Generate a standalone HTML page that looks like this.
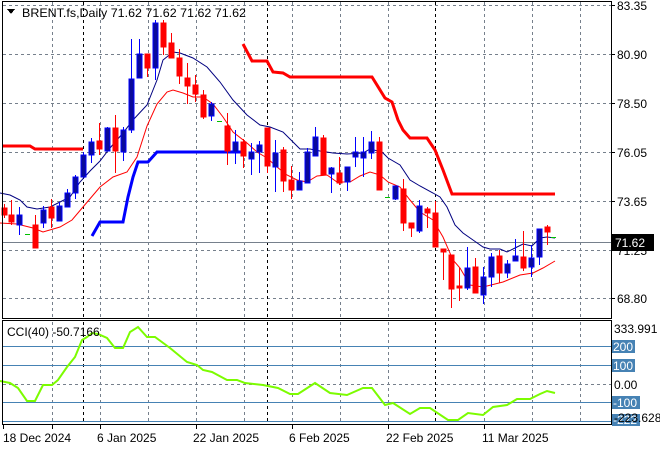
<!DOCTYPE html>
<html><head><meta charset="utf-8"><style>
html,body{margin:0;padding:0;background:#fff;}
svg{display:block;font-family:"Liberation Sans","DejaVu Sans",sans-serif;font-size:12px;}
</style></head><body>
<svg width="660" height="450" viewBox="0 0 660 450" xmlns="http://www.w3.org/2000/svg" shape-rendering="crispEdges">
<rect width="660" height="450" fill="#fff"/>
<g stroke="#76808c" stroke-dasharray="3,3" stroke-width="1">
<line x1="3" y1="5.5" x2="611" y2="5.5"/><line x1="3" y1="54.5" x2="611" y2="54.5"/><line x1="3" y1="103.5" x2="611" y2="103.5"/><line x1="3" y1="152.5" x2="611" y2="152.5"/><line x1="3" y1="201.5" x2="611" y2="201.5"/><line x1="3" y1="250.5" x2="611" y2="250.5"/><line x1="3" y1="298.5" x2="611" y2="298.5"/>
<line x1="52.5" y1="2" x2="52.5" y2="318"/><line x1="100.5" y1="2" x2="100.5" y2="318"/><line x1="148.5" y1="2" x2="148.5" y2="318"/><line x1="196.5" y1="2" x2="196.5" y2="318"/><line x1="244.5" y1="2" x2="244.5" y2="318"/><line x1="292.5" y1="2" x2="292.5" y2="318"/><line x1="340.5" y1="2" x2="340.5" y2="318"/><line x1="388.5" y1="2" x2="388.5" y2="318"/><line x1="484.5" y1="2" x2="484.5" y2="318"/><line x1="532.5" y1="2" x2="532.5" y2="318"/><line x1="580.5" y1="2" x2="580.5" y2="318"/>
<line x1="52.5" y1="322" x2="52.5" y2="424"/><line x1="100.5" y1="322" x2="100.5" y2="424"/><line x1="148.5" y1="322" x2="148.5" y2="424"/><line x1="196.5" y1="322" x2="196.5" y2="424"/><line x1="244.5" y1="322" x2="244.5" y2="424"/><line x1="292.5" y1="322" x2="292.5" y2="424"/><line x1="340.5" y1="322" x2="340.5" y2="424"/><line x1="388.5" y1="322" x2="388.5" y2="424"/><line x1="484.5" y1="322" x2="484.5" y2="424"/><line x1="532.5" y1="322" x2="532.5" y2="424"/><line x1="580.5" y1="322" x2="580.5" y2="424"/>
<line x1="3" y1="384.5" x2="611" y2="384.5"/>
</g>
<g stroke="#000" stroke-dasharray="3,3">
<line x1="83.5" y1="2" x2="83.5" y2="318"/><line x1="267.5" y1="2" x2="267.5" y2="318"/><line x1="435.5" y1="2" x2="435.5" y2="318"/>
<line x1="83.5" y1="322" x2="83.5" y2="424"/><line x1="267.5" y1="322" x2="267.5" y2="424"/><line x1="435.5" y1="322" x2="435.5" y2="424"/>
</g>
<g stroke="#4682b4">
<line x1="3" y1="346.5" x2="611" y2="346.5"/><line x1="3" y1="365.5" x2="611" y2="365.5"/><line x1="3" y1="402.5" x2="611" y2="402.5"/><line x1="3" y1="421.5" x2="611" y2="421.5"/>
</g>
<line x1="3" y1="242.5" x2="611" y2="242.5" stroke="#76808c"/>
<g shape-rendering="auto" fill="none">
<polyline stroke="#f00" stroke-width="3" points="3,146 30,146 35,149 83,149"/>
<polyline stroke="#f00" stroke-width="3" points="243,44 252,61 267,61 273,72 283,73 290,77 372,77 385,98 392,102 398,120 403,130 410,138 427,138 435,150 443,170 452,194 555,194"/>
<polyline stroke="#00f" stroke-width="3" points="92,236 100,222 123,222 128,197 133,177 138,162 148,162 157,152 243,152"/>
<polyline stroke="#000080" stroke-width="1" points="0,193 10,195 20,200 27,207 37,209 50,207 60,202 70,197 80,182 90,171 100,161 110,148 123,133 133,120 147,105 157,80 163,60 173,52 180,53 193,58 207,67 220,82 233,100 247,115 260,125 270,127 283,132 293,142 300,149 310,149 320,151 333,153 347,154 363,153 370,149 382,152 388,158 400,165 410,180 420,186 433,193 440,197 447,207 455,225 463,233 473,240 483,247 490,249 500,249 507,252 515,248 523,244 532,246 540,238 547,237 555,238"/>
<polyline stroke="#f00" stroke-width="1" points="0,223 17,224 33,228 43,232 60,227 72,220 83,207 100,187 113,177 127,172 137,157 147,126 157,104 167,92 173,90 183,93 193,97 203,97 213,104 223,117 233,132 247,143 257,152 267,158 277,167 287,175 297,180 307,182 317,176 327,175 337,182 350,182 360,176 370,172 380,175 388,182 400,187 410,200 420,212 433,220 443,237 453,260 460,268 470,285 483,287 503,282 520,275 533,273 543,268 555,261"/>
<polyline stroke="#7cfc00" stroke-width="2" points="0,381 10,383 18,388 27,401 35,401 43,385 52,385 58,380 67,367 75,357 82,340 87,337 92,333 98,334 107,338 115,348 123,348 130,332 138,327 147,337 155,337 170,348 187,362 197,365 203,370 212,372 227,380 237,380 245,383 263,385 278,388 290,394 298,394 315,383 330,393 347,395 363,388 372,388 385,405 393,403 410,414 420,408 430,408 448,420 458,420 468,413 483,415 493,407 507,405 517,399 530,399 540,394 547,391 555,393"/>
</g>
<g stroke="#00c000"><line x1="25" y1="234.5" x2="30" y2="234.5"/><line x1="217" y1="121.5" x2="222" y2="121.5"/><line x1="385" y1="197.5" x2="390" y2="197.5"/><line x1="551" y1="237.5" x2="556" y2="237.5"/></g>
<g>
<g stroke="#f00" fill="#f00">
<line x1="4.5" y1="204" x2="4.5" y2="218"/><rect x="2" y="208" width="5" height="7"/>
<line x1="11.5" y1="200" x2="11.5" y2="225"/><rect x="9" y="215" width="5" height="7"/>
<line x1="35.5" y1="215" x2="35.5" y2="248"/><rect x="33" y="225" width="5" height="23"/>
<line x1="51.5" y1="199" x2="51.5" y2="228"/><rect x="49" y="207" width="5" height="11"/>
<line x1="99.5" y1="123" x2="99.5" y2="155"/><rect x="97" y="141" width="5" height="8"/>
<line x1="115.5" y1="115" x2="115.5" y2="173"/><rect x="113" y="128" width="5" height="23"/>
<line x1="147.5" y1="54" x2="147.5" y2="77"/><rect x="145" y="54" width="5" height="14"/>
<line x1="163.5" y1="20" x2="163.5" y2="55"/><rect x="161" y="23" width="5" height="24"/>
<line x1="171.5" y1="33" x2="171.5" y2="58"/><rect x="169" y="43" width="5" height="15"/>
<line x1="179.5" y1="49" x2="179.5" y2="84"/><rect x="177" y="58" width="5" height="18"/>
<line x1="187.5" y1="63" x2="187.5" y2="104"/><rect x="185" y="78" width="5" height="8"/>
<line x1="195.5" y1="75" x2="195.5" y2="102"/><rect x="193" y="85" width="5" height="9"/>
<line x1="203.5" y1="90" x2="203.5" y2="119"/><rect x="201" y="95" width="5" height="22"/>
<line x1="227.5" y1="113" x2="227.5" y2="165"/><rect x="225" y="126" width="5" height="25"/>
<line x1="243.5" y1="139" x2="243.5" y2="168"/><rect x="241" y="142" width="5" height="14"/>
<line x1="267.5" y1="128" x2="267.5" y2="173"/><rect x="265" y="128" width="5" height="38"/>
<line x1="283.5" y1="147" x2="283.5" y2="192"/><rect x="281" y="150" width="5" height="31"/>
<line x1="291.5" y1="166" x2="291.5" y2="199"/><rect x="289" y="180" width="5" height="10"/>
<line x1="323.5" y1="135" x2="323.5" y2="175"/><rect x="321" y="138" width="5" height="37"/>
<line x1="339.5" y1="157" x2="339.5" y2="185"/><rect x="337" y="173" width="5" height="10"/>
<line x1="379.5" y1="137" x2="379.5" y2="190"/><rect x="377" y="142" width="5" height="48"/>
<line x1="403.5" y1="179" x2="403.5" y2="231"/><rect x="401" y="189" width="5" height="34"/>
<line x1="411.5" y1="223" x2="411.5" y2="237"/><rect x="409" y="223" width="5" height="5"/>
<line x1="427.5" y1="207" x2="427.5" y2="228"/><rect x="425" y="209" width="5" height="4"/>
<line x1="435.5" y1="201" x2="435.5" y2="247"/><rect x="433" y="213" width="5" height="34"/>
<line x1="443.5" y1="249" x2="443.5" y2="280"/><rect x="441" y="249" width="5" height="3"/>
<line x1="451.5" y1="255" x2="451.5" y2="308"/><rect x="449" y="255" width="5" height="34"/>
<line x1="459.5" y1="268" x2="459.5" y2="301"/><rect x="457" y="286" width="5" height="2"/>
<line x1="475.5" y1="258" x2="475.5" y2="293"/><rect x="473" y="267" width="5" height="26"/>
<line x1="499.5" y1="250" x2="499.5" y2="283"/><rect x="497" y="256" width="5" height="17"/>
<line x1="523.5" y1="231" x2="523.5" y2="271"/><rect x="521" y="257" width="5" height="11"/>
<line x1="547.5" y1="225" x2="547.5" y2="245"/><rect x="545" y="227" width="5" height="5"/>
</g>
<g stroke="#0000ff" fill="#0a0a9a">
<line x1="19.5" y1="207" x2="19.5" y2="235"/><rect x="17" y="215" width="5" height="10"/>
<line x1="43.5" y1="206" x2="43.5" y2="228"/><rect x="41" y="210" width="5" height="13"/>
<line x1="59.5" y1="202" x2="59.5" y2="221"/><rect x="57" y="206" width="5" height="15"/>
<line x1="67.5" y1="189" x2="67.5" y2="207"/><rect x="65" y="193" width="5" height="14"/>
<line x1="75.5" y1="175" x2="75.5" y2="199"/><rect x="73" y="177" width="5" height="16"/>
<line x1="83.5" y1="152" x2="83.5" y2="177"/><rect x="81" y="155" width="5" height="22"/>
<line x1="91.5" y1="138" x2="91.5" y2="163"/><rect x="89" y="142" width="5" height="13"/>
<line x1="107.5" y1="127" x2="107.5" y2="151"/><rect x="105" y="128" width="5" height="23"/>
<line x1="123.5" y1="127" x2="123.5" y2="161"/><rect x="121" y="130" width="5" height="22"/>
<line x1="131.5" y1="39" x2="131.5" y2="133"/><rect x="129" y="79" width="5" height="51"/>
<line x1="139.5" y1="39" x2="139.5" y2="78"/><rect x="137" y="54" width="5" height="24"/>
<line x1="155.5" y1="20" x2="155.5" y2="80"/><rect x="153" y="23" width="5" height="45"/>
<line x1="211.5" y1="102" x2="211.5" y2="121"/><rect x="209" y="104" width="5" height="12"/>
<line x1="235.5" y1="130" x2="235.5" y2="164"/><rect x="233" y="142" width="5" height="10"/>
<line x1="251.5" y1="143" x2="251.5" y2="175"/><rect x="249" y="152" width="5" height="7"/>
<line x1="259.5" y1="141" x2="259.5" y2="173"/><rect x="257" y="145" width="5" height="7"/>
<line x1="275.5" y1="140" x2="275.5" y2="192"/><rect x="273" y="153" width="5" height="14"/>
<line x1="299.5" y1="172" x2="299.5" y2="190"/><rect x="297" y="181" width="5" height="9"/>
<line x1="307.5" y1="148" x2="307.5" y2="183"/><rect x="305" y="152" width="5" height="31"/>
<line x1="315.5" y1="127" x2="315.5" y2="156"/><rect x="313" y="137" width="5" height="19"/>
<line x1="331.5" y1="167" x2="331.5" y2="193"/><rect x="329" y="168" width="5" height="6"/>
<line x1="347.5" y1="167" x2="347.5" y2="191"/><rect x="345" y="167" width="5" height="15"/>
<line x1="355.5" y1="137" x2="355.5" y2="167"/><rect x="353" y="152" width="5" height="5"/>
<line x1="363.5" y1="137" x2="363.5" y2="177"/><rect x="361" y="152" width="5" height="6"/>
<line x1="371.5" y1="131" x2="371.5" y2="159"/><rect x="369" y="142" width="5" height="11"/>
<line x1="395.5" y1="186" x2="395.5" y2="200"/><rect x="393" y="186" width="5" height="13"/>
<line x1="419.5" y1="200" x2="419.5" y2="233"/><rect x="417" y="206" width="5" height="25"/>
<line x1="467.5" y1="247" x2="467.5" y2="290"/><rect x="465" y="268" width="5" height="20"/>
<line x1="483.5" y1="267" x2="483.5" y2="304"/><rect x="481" y="277" width="5" height="18"/>
<line x1="491.5" y1="253" x2="491.5" y2="287"/><rect x="489" y="257" width="5" height="20"/>
<line x1="507.5" y1="260" x2="507.5" y2="278"/><rect x="505" y="264" width="5" height="9"/>
<line x1="515.5" y1="239" x2="515.5" y2="261"/><rect x="513" y="256" width="5" height="5"/>
<line x1="531.5" y1="245" x2="531.5" y2="277"/><rect x="529" y="258" width="5" height="9"/>
<line x1="539.5" y1="229" x2="539.5" y2="265"/><rect x="537" y="229" width="5" height="28"/>
</g>
</g>
<g stroke="#000" fill="none">
<rect x="2.5" y="1.5" width="609" height="317"/>
<rect x="2.5" y="320.5" width="609" height="104"/>
</g>
<g stroke="#000">
<line x1="611" y1="5.5" x2="615" y2="5.5"/><line x1="611" y1="54.5" x2="615" y2="54.5"/><line x1="611" y1="103.5" x2="615" y2="103.5"/><line x1="611" y1="152.5" x2="615" y2="152.5"/><line x1="611" y1="201.5" x2="615" y2="201.5"/><line x1="611" y1="250.5" x2="615" y2="250.5"/><line x1="611" y1="298.5" x2="615" y2="298.5"/>
<line x1="3.5" y1="425" x2="3.5" y2="429"/><line x1="52.5" y1="425" x2="52.5" y2="429"/><line x1="100.5" y1="425" x2="100.5" y2="429"/><line x1="196.5" y1="425" x2="196.5" y2="429"/><line x1="292.5" y1="425" x2="292.5" y2="429"/><line x1="388.5" y1="425" x2="388.5" y2="429"/><line x1="484.5" y1="425" x2="484.5" y2="429"/>
</g>
<polygon points="7,9 15,9 11,14" fill="#000"/>
<text x="22" y="17" fill="#000" textLength="224" lengthAdjust="spacingAndGlyphs">BRENT.fs,Daily  71.62 71.62 71.62 71.62</text>
<text x="7" y="336" fill="#000">CCI(40) -50.7166</text>
<g fill="#000">
<text x="617" y="10">83.35</text><text x="617" y="59">80.90</text><text x="617" y="108">78.50</text><text x="617" y="157">76.05</text><text x="617" y="206">73.65</text><text x="617" y="255">71.25</text><text x="617" y="303">68.80</text>
</g>
<rect x="612" y="234" width="42" height="17" fill="#000"/>
<text x="615" y="247" fill="#fff">71.62</text>
<text x="614" y="333" fill="#000">333.991</text>
<rect x="612" y="340" width="23" height="13" fill="#4682b4"/><text x="613" y="351" fill="#fff">200</text>
<rect x="612" y="359" width="23" height="13" fill="#4682b4"/><text x="613" y="370" fill="#fff">100</text>
<text x="614" y="389" fill="#000">0.00</text>
<rect x="612" y="396" width="28" height="13" fill="#4682b4"/><text x="613" y="407" fill="#fff">-100</text>
<rect x="612" y="414" width="28" height="12" fill="#4682b4"/><text x="613" y="424" fill="#fff">-222</text>
<text x="614" y="422" fill="#000">-223.628</text>
<g fill="#000">
<text x="3" y="442">18 Dec 2024</text><text x="97" y="442">6 Jan 2025</text><text x="193" y="442">22 Jan 2025</text><text x="289" y="442">6 Feb 2025</text><text x="386" y="442">22 Feb 2025</text><text x="482" y="442">11 Mar 2025</text>
</g>
</svg>
</body></html>
